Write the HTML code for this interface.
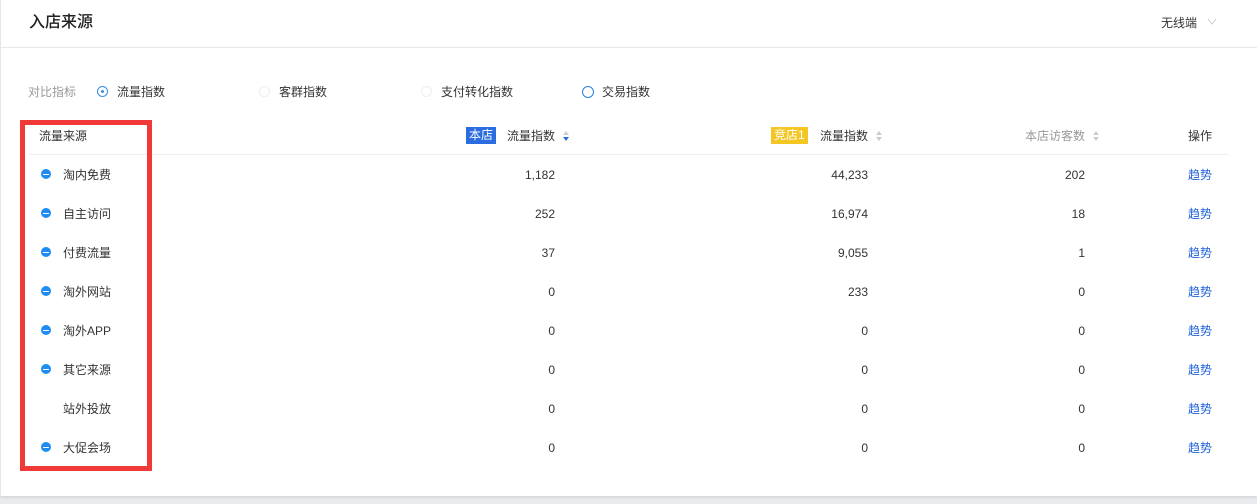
<!DOCTYPE html>
<html><head><meta charset="utf-8"><style>
body{margin:0;width:1257px;height:504px;background:#e9ebee;font-family:"Liberation Sans","Noto Sans CJK SC",sans-serif;position:relative;overflow:hidden;font-size:12px;color:#333}
.card{position:absolute;left:0;top:0;width:1257px;height:496px;background:#fff;border-left:1px solid #e6e6e6;box-sizing:border-box;box-shadow:0 1px 3px rgba(0,0,0,.12)}
.a{position:absolute;white-space:nowrap;line-height:16px}
.r{text-align:right}
.dot{position:absolute;width:10px;height:10px;border-radius:50%;background:#1f8cf2}
.dot:after{content:"";position:absolute;left:2px;top:4.5px;width:6px;height:1px;background:#fff}
.rad{position:absolute;width:11px;height:11px;border-radius:50%;border:1px solid #ddd;box-sizing:border-box}
.link{color:#2162d9}
.sort{position:absolute;width:6px;height:10px}
</style></head><body>
<div class="card">
<div class="a" style="left:28px;top:13px;font-size:16px;line-height:20px;color:#222;font-weight:500">入店来源</div>
<div class="a" style="left:1160px;top:15px;color:#333">无线端</div>
<svg class="a" style="left:1206px;top:18px" width="10" height="8"><path d="M1 1 L5 6 L9 1" fill="none" stroke="#ccc" stroke-width="1"/></svg>
<div style="position:absolute;left:0;top:47px;width:1257px;height:1px;background:#e8e8e8"></div>

<div class="a" style="left:27px;top:84px;color:#999">对比指标</div>
<div class="rad" style="left:96px;top:86px;border-color:#3a8ee6"><div style="position:absolute;left:3px;top:3px;width:3px;height:3px;border-radius:50%;background:#3a8ee6"></div></div>
<div class="a" style="left:116px;top:84px">流量指数</div>
<div class="rad" style="left:258px;top:86px;border-color:#eee"></div>
<div class="a" style="left:278px;top:84px">客群指数</div>
<div class="rad" style="left:420px;top:86px;border-color:#eee"></div>
<div class="a" style="left:440px;top:84px">支付转化指数</div>
<div class="rad" style="left:581px;top:86px;border-color:#2a7fd4;width:12px;height:12px"></div>
<div class="a" style="left:601px;top:84px">交易指数</div>

<div class="a" style="left:38px;top:128px">流量来源</div>
<div class="a" style="left:465px;top:127px;background:#2b6de0;color:#fff;padding:0 3px;line-height:17px">本店</div>
<div class="a" style="left:506px;top:128px">流量指数</div>
<svg class="sort" style="left:562px;top:131px"><path d="M0 4 L3 0 L6 4Z" fill="#ccc"/><path d="M0 6 L3 10 L6 6Z" fill="#2b6de0"/></svg>
<div class="a" style="left:770px;top:127px;background:#f3c623;color:#fff;padding:0 3px;line-height:17px">竞店1</div>
<div class="a" style="left:819px;top:128px">流量指数</div>
<svg class="sort" style="left:875px;top:131px"><path d="M0 4 L3 0 L6 4Z" fill="#ccc"/><path d="M0 6 L3 10 L6 6Z" fill="#ccc"/></svg>
<div class="a" style="left:1024px;top:128px;color:#999">本店访客数</div>
<svg class="sort" style="left:1092px;top:131px"><path d="M0 4 L3 0 L6 4Z" fill="#ccc"/><path d="M0 6 L3 10 L6 6Z" fill="#ccc"/></svg>
<div class="a" style="left:1187px;top:128px">操作</div>
<div style="position:absolute;left:28px;top:154px;width:1200px;height:1px;background:#eee"></div>

<div id="rows"></div>
<div style="position:absolute;left:19px;top:120px;width:132px;height:351px;border:5px solid #f03a3a;box-sizing:border-box"></div>
</div>
<script>
var d=[["淘内免费","1,182","44,233","202",1],["自主访问","252","16,974","18",1],["付费流量","37","9,055","1",1],["淘外网站","0","233","0",1],["淘外APP","0","0","0",1],["其它来源","0","0","0",1],["站外投放","0","0","0",0],["大促会场","0","0","0",1]];
var h="";d.forEach(function(r,i){var y=167+i*39;
if(r[4])h+='<div class="dot" style="left:40px;top:'+(y+2)+'px"></div>';
h+='<div class="a" style="left:62px;top:'+y+'px">'+r[0]+'</div>';
h+='<div class="a r" style="left:454px;width:100px;top:'+y+'px">'+r[1]+'</div>';
h+='<div class="a r" style="left:767px;width:100px;top:'+y+'px">'+r[2]+'</div>';
h+='<div class="a r" style="left:984px;width:100px;top:'+y+'px">'+r[3]+'</div>';
h+='<div class="a link" style="left:1187px;top:'+y+'px">趋势</div>';});
document.getElementById("rows").innerHTML=h;
</script>
</body></html>
